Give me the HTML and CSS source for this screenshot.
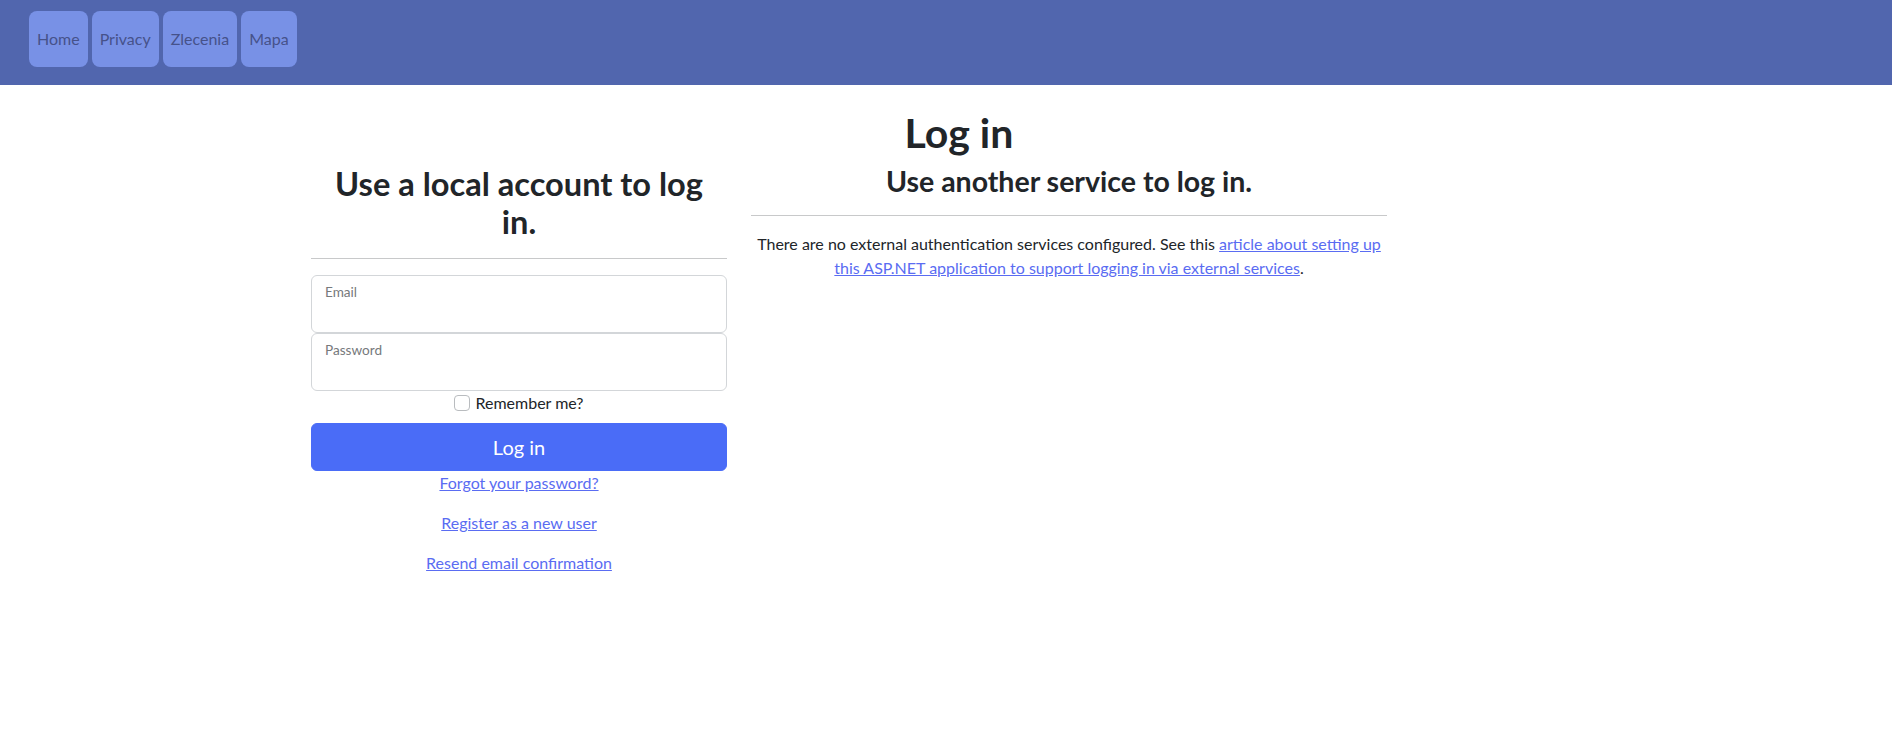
FILE: index.html
```html
<!DOCTYPE html>
<html lang="en">
<head>
<meta charset="utf-8">
<title>Log in</title>
<link rel="stylesheet" href="styles.css">
</head>
<body>
<header class="navbar">
  <ul class="nav">
    <li><a class="nav-link" href="#">Home</a></li>
    <li><a class="nav-link" href="#">Privacy</a></li>
    <li><a class="nav-link" href="#">Zlecenia</a></li>
    <li><a class="nav-link" href="#">Mapa</a></li>
  </ul>
</header>
<main class="container">
  <h1 class="page-title">Log in</h1>
  <div class="row">
    <div class="col-local">
      <section>
        <h2 class="section-title">Use a local account to log<br>in.</h2>
        <hr class="divider">
        <form class="login-form">
          <div class="floating">
            <input class="field" type="email" id="email">
            <label class="field-label" for="email">Email</label>
          </div>
          <div class="floating">
            <input class="field" type="password" id="password">
            <label class="field-label" for="password">Password</label>
          </div>
          <div class="check">
            <span class="checkbox"></span>
            <span class="check-label">Remember me?</span>
          </div>
          <button class="btn-primary" type="button">Log in</button>
          <div class="links">
            <p><a href="#">Forgot your password?</a></p>
            <p><a href="#">Register as a new user</a></p>
            <p><a href="#">Resend email confirmation</a></p>
          </div>
        </form>
      </section>
    </div>
    <div class="col-external">
      <section>
        <h3 class="section-subtitle">Use another service to log in.</h3>
        <hr class="divider">
        <p class="note">There are no external authentication services configured. See this <a href="#">article about setting up<br>this ASP.NET application to support logging in via external services</a>.</p>
      </section>
    </div>
  </div>
</main>
</body>
</html>
```
FILE: styles.css
```css
* { box-sizing: border-box; }
html, body { margin: 0; padding: 0; }
body {
  font-family: Lato, "Noto Sans", sans-serif;
  font-size: 16px;
  line-height: 1.5;
  color: #212529;
  background: #fff;
}
.navbar {
  height: 85px;
  background: #5166ae;
  padding: 11px 0 0 29px;
  margin-bottom: 24px;
}
.nav {
  list-style: none;
  margin: 0;
  padding: 0;
  display: flex;
  gap: 4px;
}
.nav-link {
  display: block;
  height: 56px;
  padding: 16px 8px;
  background: #7891e6;
  border-radius: 8px;
  color: #46528a;
  text-decoration: none;
}
.container {
  width: 1320px;
  padding: 0 12px;
  margin-left: calc(50% - 647px);
  text-align: center;
}
.page-title {
  font-size: 41px;
  font-weight: 700;
  line-height: 48px;
  margin: 0 0 8px;
}
.row {
  display: flex;
  margin: 0 -12px;
}
.col-local { width: 440px; padding: 0 12px; }
.col-external { width: 660px; padding: 0 12px; }
.section-title {
  font-size: 32.6px;
  font-weight: 700;
  line-height: 38.4px;
  margin: 0 0 8px;
  white-space: nowrap;
}
.section-subtitle {
  font-size: 28.5px;
  font-weight: 700;
  line-height: 33.6px;
  margin: 0 0 8px;
}
.divider {
  border: 0;
  border-top: 1px solid #c8c9ca;
  height: 0;
  margin: 16px 0;
}
.floating { position: relative; }
.field {
  display: block;
  width: 100%;
  height: 58px;
  border: 1px solid #d3d6d9;
  border-radius: 6px;
  background: #fff;
  font: inherit;
  padding: 26px 12px 6px;
}
.field-label {
  position: absolute;
  left: 14px;
  top: 7px;
  font-size: 13.6px;
  line-height: 20px;
  color: #76797c;
  pointer-events: none;
}
.check {
  height: 24px;
  display: flex;
  align-items: center;
  justify-content: center;
  gap: 5px;
  margin-bottom: 8px;
}
.checkbox {
  width: 16px;
  height: 16px;
  border: 1px solid #b9bcbf;
  border-radius: 4px;
  background: #fff;
}
.btn-primary {
  display: block;
  width: 100%;
  height: 48px;
  border: 1px solid #4a6cf7;
  border-radius: 6px;
  background: #4a6cf7;
  color: #fff;
  font: inherit;
  font-size: 20px;
}
.links p { margin: 0 0 16px; }
a { color: #5a6cf2; text-decoration: underline; }
.note { margin: 0; white-space: nowrap; }
```
